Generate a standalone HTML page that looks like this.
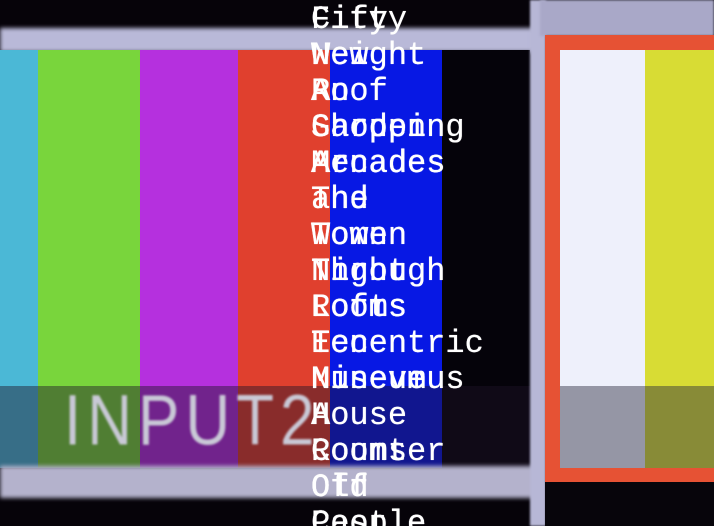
<!DOCTYPE html>
<html style="overflow:hidden;height:526px"><head><style>
body{margin:0;width:714px;height:526px;overflow:hidden;background:#060309;position:relative;font-family:"Liberation Mono",monospace}
div{position:absolute}
.t{left:311px;color:#fff;font-weight:normal;font-size:32px;line-height:36px;white-space:pre;text-shadow:0 0 0.6px #fff}
</style></head><body>
<div style="left:0;top:28px;width:535px;height:24px;background:#b9b9d8;filter:blur(2px)"></div>
<div style="left:0;top:50px;width:38px;height:418px;background:#4bb8d6"></div>
<div style="left:38px;top:50px;width:102px;height:418px;background:#79d53c"></div>
<div style="left:140px;top:50px;width:98px;height:418px;background:#b530de"></div>
<div style="left:238px;top:50px;width:92px;height:418px;background:#e0402e"></div>
<div style="left:330px;top:50px;width:112px;height:418px;background:#0718e4"></div>
<div style="left:442px;top:50px;width:88px;height:418px;background:#05030a"></div>
<div style="left:0;top:386px;width:530px;height:82px;background:rgba(30,20,40,0.45)"></div>
<div style="left:64px;top:380px;color:#c9c9d6;font-family:'Liberation Sans',sans-serif;font-size:62px;letter-spacing:6px;transform:scaleY(1.15);transform-origin:top left;filter:blur(1px)">INPUT2</div>
<div style="left:0;top:466px;width:535px;height:32px;background:#b4b2cc;filter:blur(2px)"></div>
<div style="left:530px;top:0;width:16px;height:526px;background:#b7b7d6;filter:blur(1px)"></div>
<div style="left:540px;top:0;width:174px;height:36px;background:#a9a8c8;filter:blur(1px)"></div>
<div style="left:545px;top:35px;width:169px;height:447px;background:#e65234"></div>
<div style="left:560px;top:50px;width:85px;height:418px;background:#eef0fb"></div>
<div style="left:645px;top:50px;width:69px;height:418px;background:#d8dc34"></div>
<div style="left:560px;top:386px;width:154px;height:82px;background:rgba(40,40,60,0.45)"></div>
<div style="left:545px;top:482px;width:169px;height:44px;background:#07050b"></div>
<div class="t" style="top:-34px">Bay
Fifty
Weight
Roof
Shopping
Menades
The
Women
Night
Rooms
Eccentric
Nineveus
House
Counter
Old
People</div>
<div class="t" style="top:-34px">Joy
City
New
An
Garden
Arcades
and
Town
Through
Lofts
Ten
Museum
A
Rooms
Off
Castle</div>
</body></html>
